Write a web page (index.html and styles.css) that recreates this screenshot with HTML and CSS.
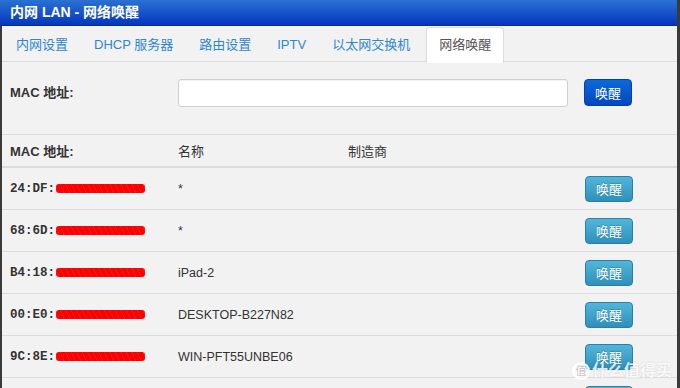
FILE: index.html
```html
<!DOCTYPE html>
<html lang="zh-CN">
<head>
<meta charset="utf-8">
<title>内网 LAN - 网络唤醒</title>
<link rel="stylesheet" href="styles.css">
</head>
<body>
<div class="frame">
  <div class="title">内网 LAN - 网络唤醒</div>
  <div class="content">
    <ul class="tabs">
      <li class="tab">内网设置</li>
      <li class="tab">DHCP 服务器</li>
      <li class="tab">路由设置</li>
      <li class="tab">IPTV</li>
      <li class="tab">以太网交换机</li>
      <li class="tab active">网络唤醒</li>
    </ul>
    <div class="form-row">
      <label class="form-label">MAC 地址:</label>
      <input class="mac-input" type="text">
      <button class="btn btn-primary">唤醒</button>
    </div>
    <div class="list">
      <div class="row head">
        <div class="c-mac">MAC 地址:</div>
        <div class="c-name">名称</div>
        <div class="c-vendor">制造商</div>
      </div>
      <div class="row">
        <div class="c-mac mono">24:DF:<span class="redact"></span></div>
        <div class="c-name">*</div>
        <div class="c-vendor"></div>
        <button class="btn btn-info">唤醒</button>
      </div>
      <div class="row">
        <div class="c-mac mono">68:6D:<span class="redact"></span></div>
        <div class="c-name">*</div>
        <div class="c-vendor"></div>
        <button class="btn btn-info">唤醒</button>
      </div>
      <div class="row">
        <div class="c-mac mono">B4:18:<span class="redact"></span></div>
        <div class="c-name">iPad-2</div>
        <div class="c-vendor"></div>
        <button class="btn btn-info">唤醒</button>
      </div>
      <div class="row">
        <div class="c-mac mono">00:E0:<span class="redact"></span></div>
        <div class="c-name">DESKTOP-B227N82</div>
        <div class="c-vendor"></div>
        <button class="btn btn-info">唤醒</button>
      </div>
      <div class="row">
        <div class="c-mac mono">9C:8E:<span class="redact"></span></div>
        <div class="c-name">WIN-PFT55UNBE06</div>
        <div class="c-vendor"></div>
        <button class="btn btn-info">唤醒</button>
      </div>
      <div class="row">
        <div class="c-mac mono"></div>
        <div class="c-name"></div>
        <div class="c-vendor"></div>
        <button class="btn btn-info" aria-label="唤醒"></button>
      </div>
    </div>
  </div>
  <div class="watermark"><span class="wm-circle">值</span><span class="wm-text">什么值得买</span></div>
</div>
</body>
</html>
```
FILE: styles.css
```css
* { box-sizing: border-box; }
html, body { margin: 0; padding: 0; }
body {
  background: #3a3a3a;
  font-family: "Liberation Sans", "Noto Sans CJK SC", sans-serif;
  color: #333;
  width: 680px;
  height: 388px;
  overflow: hidden;
}
.frame {
  position: relative;
  width: 677px;
  height: 388px;
  overflow: hidden;
  display: flex;
  flex-direction: column;
}
.title {
  height: 26px;
  flex: none;
  background: linear-gradient(#2a72d2, #0436c0);
  border-bottom: 1px solid #0a2c9a;
  color: #fff;
  font-weight: bold;
  font-size: 14px;
  line-height: 24px;
  padding-left: 10px;
}
.content {
  margin-left: 2px;
  flex: 1;
  background: #f2f2f2;
}
.tabs {
  list-style: none;
  margin: 0;
  padding: 1px 0 0 1px;
  height: 36px;
  display: flex;
  gap: 0;
  border-bottom: 1px solid #dcdcdc;
}
.tab {
  padding: 0 12px;
  height: 35px;
  line-height: 34px;
  font-size: 13px;
  color: #2f86d6;
  border: 1px solid transparent;
  border-bottom: none;
}
.tab.active {
  background: #fff;
  color: #555;
  border-color: #dcdcdc;
  border-radius: 4px 4px 0 0;
  height: 36px;
  margin-left: 3px;
}
.form-row {
  height: 73px;
  display: flex;
  align-items: flex-start;
  padding: 17px 0 0 8px;
  border-bottom: 1px solid #dcdcdc;
}
.form-label {
  width: 168px;
  font-weight: bold;
  font-size: 13px;
  line-height: 28px;
}
.mac-input {
  width: 390px;
  height: 28px;
  margin: 0;
  border: 1px solid #cfcfcf;
  border-radius: 3px;
  background: #fff;
  box-shadow: inset 0 1px 1px rgba(0,0,0,0.06);
}
.btn {
  font-family: "Liberation Sans", "Noto Sans CJK SC", sans-serif;
  font-size: 13px;
  color: #fff;
  border-radius: 4px;
  padding: 0;
  width: 48px;
  height: 26px;
  cursor: pointer;
}
.btn-primary {
  margin-left: 16px;
  height: 27px;
  background: linear-gradient(#0a6ad8, #0346c4);
  border: 1px solid #0a40a8;
}
.btn-info {
  margin-left: auto;
  margin-right: 44px;
  background: linear-gradient(#52b6d9, #2f8fba);
  border: 1px solid #2a7fa8;
  text-shadow: 0 -1px 0 rgba(0,0,0,0.2);
}
.row {
  display: flex;
  align-items: center;
  padding-left: 8px;
  height: 42px;
  border-bottom: 1px solid #dcdcdc;
  font-size: 12.5px;
}
.row.head {
  height: 33px;
  border-bottom: 2px solid #dcdcdc;
  font-size: 13px;
}
.head .c-mac { font-weight: bold; }
.c-mac { width: 168px; }
.c-name { width: 170px; }
.c-vendor { width: 200px; }
.mono {
  font-family: "Liberation Mono", monospace;
  font-weight: bold;
  font-size: 12.5px;
  color: #333;
  display: flex;
  align-items: center;
}
.redact {
  display: inline-block;
  width: 89px;
  height: 9px;
  margin-left: 1px;
  border-radius: 3px;
  background: repeating-linear-gradient(65deg, #ff0000 0 2px, #f21818 2px 3px, #ff0000 3px 5px);
}
.watermark {
  position: absolute;
  left: 572px;
  top: 361px;
  display: flex;
  align-items: center;
  gap: 2px;
  color: rgba(255,255,255,0.85);
}
.wm-circle {
  width: 18px;
  height: 18px;
  border-radius: 50%;
  border: 2px solid rgba(255,255,255,0.85);
  font-size: 11px;
  line-height: 14px;
  text-align: center;
  color: rgba(190,190,190,0.9);
  background: rgba(255,255,255,0.6);
}
.wm-text {
  font-size: 16px;
  line-height: 20px;
  font-weight: bold;
  text-shadow: 0 0 2px rgba(0,0,0,0.15);
}
```
